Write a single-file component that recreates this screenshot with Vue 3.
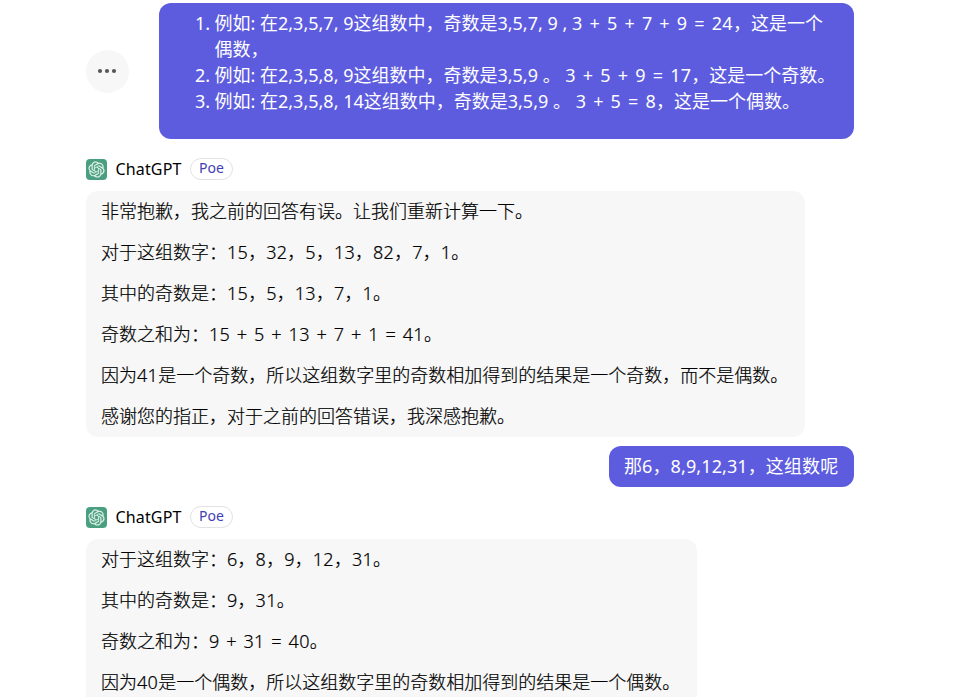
<script setup>
const examples = [
  { lines: ['例如: 在2,3,5,7, 9这组数中，奇数是3,5,7, 9 , 3 + 5 + 7 + 9 = 24，这是一个', '偶数，'] },
  { lines: ['例如: 在2,3,5,8, 9这组数中，奇数是3,5,9 。 3 + 5 + 9 = 17，这是一个奇数。'] },
  { lines: ['例如: 在2,3,5,8, 14这组数中，奇数是3,5,9 。 3 + 5 = 8，这是一个偶数。'] },
]
const replies = [
  {
    size: 'wide',
    paragraphs: [
      '非常抱歉，我之前的回答有误。让我们重新计算一下。',
      '对于这组数字：15，32，5，13，82，7，1。',
      '其中的奇数是：15，5，13，7，1。',
      '奇数之和为：15 + 5 + 13 + 7 + 1 = 41。',
      '因为41是一个奇数，所以这组数字里的奇数相加得到的结果是一个奇数，而不是偶数。',
      '感谢您的指正，对于之前的回答错误，我深感抱歉。',
    ],
    followUp: '那6，8,9,12,31，这组数呢',
  },
  {
    size: 'narrow',
    paragraphs: [
      '对于这组数字：6，8，9，12，31。',
      '其中的奇数是：9，31。',
      '奇数之和为：9 + 31 = 40。',
      '因为40是一个偶数，所以这组数字里的奇数相加得到的结果是一个偶数。',
    ],
  },
]

// Splits a line into plain text, sums ("1 + 2 = 3") and, for replies, bare numbers.
function tokens(text, numbers) {
  const pattern = numbers ? /(\d+(?: [+=] \d+)*)/ : /(\d+(?: [+=] \d+)+)/
  return text.split(pattern).map((value, i) => ({ value, math: i % 2 === 1 }))
}
</script>

<template>
  <main class="chat">
    <div class="user-row first">
      <button class="more" aria-label="More">
        <svg width="20" height="6" viewBox="0 0 20 6">
          <circle cx="3" cy="3" r="2.1" /><circle cx="10" cy="3" r="2.1" /><circle cx="17" cy="3" r="2.1" />
        </svg>
      </button>
      <div class="bubble user examples">
        <ol>
          <li v-for="(item, i) in examples" :key="i">
            <span class="num">{{ i + 1 }}.</span>
            <div>
              <div v-for="line in item.lines" :key="line"><span v-for="(t, k) in tokens(line, false)" :key="k" :class="{ math: t.math }">{{ t.value }}</span></div>
            </div>
          </li>
        </ol>
      </div>
    </div>
    <template v-for="reply in replies" :key="reply.size">
      <header class="bot">
        <svg class="logo" width="21" height="21" viewBox="0 0 21 21">
          <rect width="21" height="21" rx="4" fill="#4a9f80" />
          <g transform="translate(2.5 2.5) scale(.6667)" fill="#e4f3ec" stroke="#e4f3ec" stroke-width=".25">
            <path d="M22.2819 9.8211a5.9847 5.9847 0 0 0-.5157-4.9108 6.0462 6.0462 0 0 0-6.5098-2.9A6.0651 6.0651 0 0 0 4.9807 4.1818a5.9847 5.9847 0 0 0-3.9977 2.9 6.0462 6.0462 0 0 0 .7427 7.0966 5.98 5.98 0 0 0 .511 4.9107 6.051 6.051 0 0 0 6.5146 2.9001A5.9847 5.9847 0 0 0 13.2599 24a6.0557 6.0557 0 0 0 5.7718-4.2058 5.9894 5.9894 0 0 0 3.9977-2.9001 6.0557 6.0557 0 0 0-.7475-7.073zm-9.022 12.6081a4.4755 4.4755 0 0 1-2.8764-1.0408l.1419-.0804 4.7783-2.7582a.7948.7948 0 0 0 .3927-.6813v-6.7369l2.02 1.1686a.071.071 0 0 1 .038.052v5.5826a4.504 4.504 0 0 1-4.4945 4.4944zm-9.6607-4.1254a4.4708 4.4708 0 0 1-.5346-3.0137l.142.0852 4.783 2.7582a.7712.7712 0 0 0 .7806 0l5.8428-3.3685v2.3324a.0804.0804 0 0 1-.0332.0615L9.74 19.9502a4.4992 4.4992 0 0 1-6.1408-1.6464zM2.3408 7.8956a4.485 4.485 0 0 1 2.3655-1.9728V11.6a.7664.7664 0 0 0 .3879.6765l5.8144 3.3543-2.0201 1.1685a.0757.0757 0 0 1-.071 0l-4.8303-2.7865A4.504 4.504 0 0 1 2.3408 7.872zm16.5963 3.8558L13.1038 8.364 15.1192 7.2a.0757.0757 0 0 1 .071 0l4.8303 2.7913a4.4944 4.4944 0 0 1-.6765 8.1042v-5.6772a.79.79 0 0 0-.407-.667zm2.0107-3.0231l-.142-.0852-4.7735-2.7818a.7759.7759 0 0 0-.7854 0L9.409 9.2297V6.8974a.0662.0662 0 0 1 .0284-.0615l4.8303-2.7866a4.4992 4.4992 0 0 1 6.6802 4.66zM8.3065 12.863l-2.02-1.1638a.0804.0804 0 0 1-.038-.0567V6.0742a4.4992 4.4992 0 0 1 7.3757-3.4537l-.142.0805L8.704 5.459a.7948.7948 0 0 0-.3927.6813zm1.0976-2.3654l2.602-1.4998 2.6069 1.4998v2.9994l-2.5974 1.4997-2.6067-1.4997Z" />
          </g>
        </svg>
        <span class="name">ChatGPT</span>
        <span class="tag">Poe</span>
      </header>
      <section class="bubble reply" :class="reply.size">
        <p v-for="text in reply.paragraphs" :key="text"><span v-for="(t, k) in tokens(text, true)" :key="k" :class="{ math: t.math }">{{ t.value }}</span></p>
      </section>
      <div v-if="reply.followUp" class="user-row">
        <div class="bubble user question">{{ reply.followUp }}</div>
      </div>
    </template>
  </main>
</template>

<style>
body { margin: 0; background: #fff; overflow: hidden; }
</style>

<style scoped>
.chat {
  box-sizing: border-box;
  height: 697px;
  overflow: hidden;
  padding: 3px 122px 0 86px;
  font: 300 18px/26.2px "Noto Sans", "Noto Sans CJK SC", sans-serif;
  text-spacing-trim: space-all;
  color: #000;
}
.user-row { display: flex; justify-content: flex-end; }
.user-row.first { justify-content: space-between; align-items: center; }
.more {
  display: flex; align-items: center; justify-content: center;
  width: 43px; height: 43px; padding: 0 2px 0 0; border: 0; border-radius: 50%;
  background: #f7f7f7; fill: #575757;
}
.bubble { box-sizing: border-box; border-radius: 12px; padding: 7.4px 15px; white-space: nowrap; }
.user { background: #5d5cde; color: #fff; font-weight: 400; }
.examples { width: 695px; height: 136px; line-height: 26px; }
ol { list-style: none; margin: 0; padding: 0 0 0 21px; }
li { display: flex; }
.num { width: 19.5px; flex: none; }
.math { letter-spacing: .25px; word-spacing: 2px; }
.bot { display: flex; align-items: center; height: 22px; padding: 19px 0 11px; }
.name { margin-left: 8.5px; font-size: 16px; letter-spacing: .15px; width: 66.5px; font-weight: 400; }
.tag {
  box-sizing: border-box; width: 43px; height: 22px; margin-left: 8px;
  border: 1px solid #e2e2e4; border-radius: 11px;
  font-size: 14px; line-height: 18px; text-align: center; color: #4240b5; font-weight: 400;
}
.reply { background: #f7f7f7; -webkit-text-stroke: .2px #000; }
.reply .math { letter-spacing: .3px; word-spacing: 1.7px; }
.wide { width: 719px; height: 246px; margin-bottom: 9px; }
.narrow { width: 611px; }
.reply p { margin: 0 0 14.8px; }
.question { width: 245px; height: 41px; letter-spacing: .1px; }
</style>
